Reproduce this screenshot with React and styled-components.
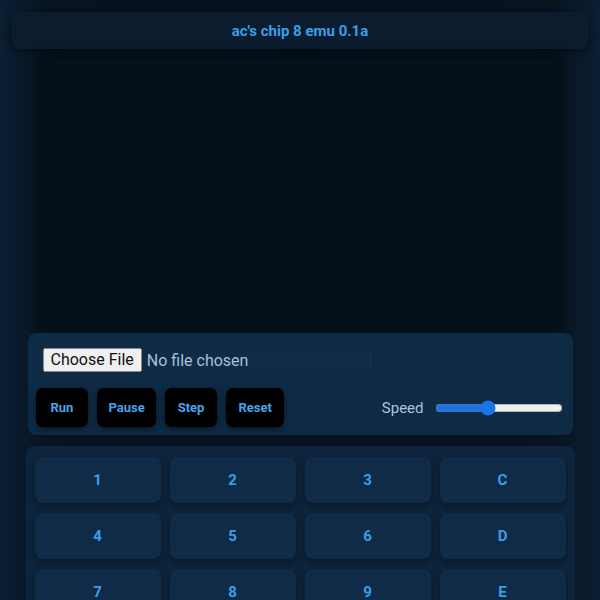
import React, { useState } from "react";
import styled, { createGlobalStyle } from "styled-components";

const GlobalStyle = createGlobalStyle`
  html, body {
    margin: 0;
    padding: 0;
    background: linear-gradient(90deg, #0b1e33 0%, #07141f 8%, #06121d 50%, #07141f 92%, #0b1e33 100%);
    font-family: Roboto, "Liberation Sans", sans-serif;
    min-height: 600px;
  }
`;

const Page = styled.div`
  padding: 12px 12px 0;
  display: flex;
  flex-direction: column;
  align-items: center;
`;

const Header = styled.div`
  width: 100%;
  height: 37px;
  box-sizing: border-box;
  display: flex;
  align-items: center;
  justify-content: center;
  background: #0c1c2f;
  border-radius: 8px;
  box-shadow: 0 3px 10px rgba(0, 0, 0, 0.45);
  color: #3b9fe6;
  font-weight: 700;
  font-size: 15px;
`;

const Screen = styled.div`
  margin-top: 9px;
  width: 528px;
  height: 272px;
  background: #04101a;
  box-shadow: 0 0 8px rgba(0, 0, 0, 0.5);
`;

const Panel = styled.div`
  margin-top: 3px;
  width: 545px;
  box-sizing: border-box;
  background: #0f2a45;
  border-radius: 8px;
  padding: 15px 9px 8px 8px;
  display: flex;
  flex-direction: column;
  gap: 16px;
`;

const FileRow = styled.div`
  width: 320px;
  padding: 0 7px;
  border-radius: 3px;
  background: #0f2b46;
  border-right: 1px solid #14324f;
  display: flex;
  align-items: center;
  gap: 5px;
`;

const FileButton = styled.span`
  background: #efefef;
  border: 1px solid #8a8a8a;
  border-radius: 2px;
  color: #111;
  font-size: 16px;
  padding: 1px 7px;
  line-height: 20px;
`;

const FileName = styled.span`
  color: #a9c1d8;
  font-size: 16px;
`;

const Controls = styled.div`
  display: flex;
  align-items: center;
  gap: 9px;
`;

const Button = styled.button`
  height: 39px;
  padding: 0 ${(props) => props.$pad}px;
  border: 0;
  border-radius: 7px;
  background: #000;
  box-shadow: 0 2px 6px rgba(0, 0, 0, 0.5);
  color: #4aa3e8;
  font-family: Roboto, "Liberation Sans", sans-serif;
  font-weight: 700;
  font-size: 13px;
  cursor: pointer;
`;

const SpeedLabel = styled.label`
  margin-left: auto;
  color: #a9c4dc;
  font-size: 15px;
  display: flex;
  align-items: center;
  gap: 11px;
`;

const Slider = styled.input`
  width: 128px;
  margin: 0 1px 0 0;
  accent-color: #1a73e8;
`;

const Keypad = styled.div`
  margin-top: 11px;
  width: 549px;
  box-sizing: border-box;
  background: #0d243c;
  border-radius: 8px;
  padding: 11px 9px;
  display: grid;
  grid-template-columns: repeat(4, 1fr);
  gap: 10px 9px;
`;

const Key = styled.button`
  height: 46px;
  border: 0;
  border-radius: 8px;
  background: #0f2b48;
  box-shadow: 0 3px 6px rgba(0, 0, 0, 0.35);
  color: #3b9fe6;
  font-family: Roboto, "Liberation Sans", sans-serif;
  font-weight: 700;
  font-size: 15px;
`;

const keys = ["1", "2", "3", "C", "4", "5", "6", "D", "7", "8", "9", "E", "A", "0", "B", "F"];

const buttons = [
  { label: "Run", pad: 15 },
  { label: "Pause", pad: 11 },
  { label: "Step", pad: 13 },
  { label: "Reset", pad: 12 },
];

export default function App() {
  const [speed, setSpeed] = useState(41);
  return (
    <>
      <GlobalStyle />
      <Page>
        <Header>ac's chip 8 emu 0.1a</Header>
        <Screen />
        <Panel>
          <FileRow>
            <FileButton>Choose File</FileButton>
            <FileName>No file chosen</FileName>
          </FileRow>
          <Controls>
            {buttons.map((b) => (
              <Button key={b.label} $pad={b.pad}>
                {b.label}
              </Button>
            ))}
            <SpeedLabel>
              Speed
              <Slider
                type="range"
                min="0"
                max="100"
                value={speed}
                onChange={(e) => setSpeed(e.target.value)}
              />
            </SpeedLabel>
          </Controls>
        </Panel>
        <Keypad>
          {keys.map((k) => (
            <Key key={k}>{k}</Key>
          ))}
        </Keypad>
      </Page>
    </>
  );
}
